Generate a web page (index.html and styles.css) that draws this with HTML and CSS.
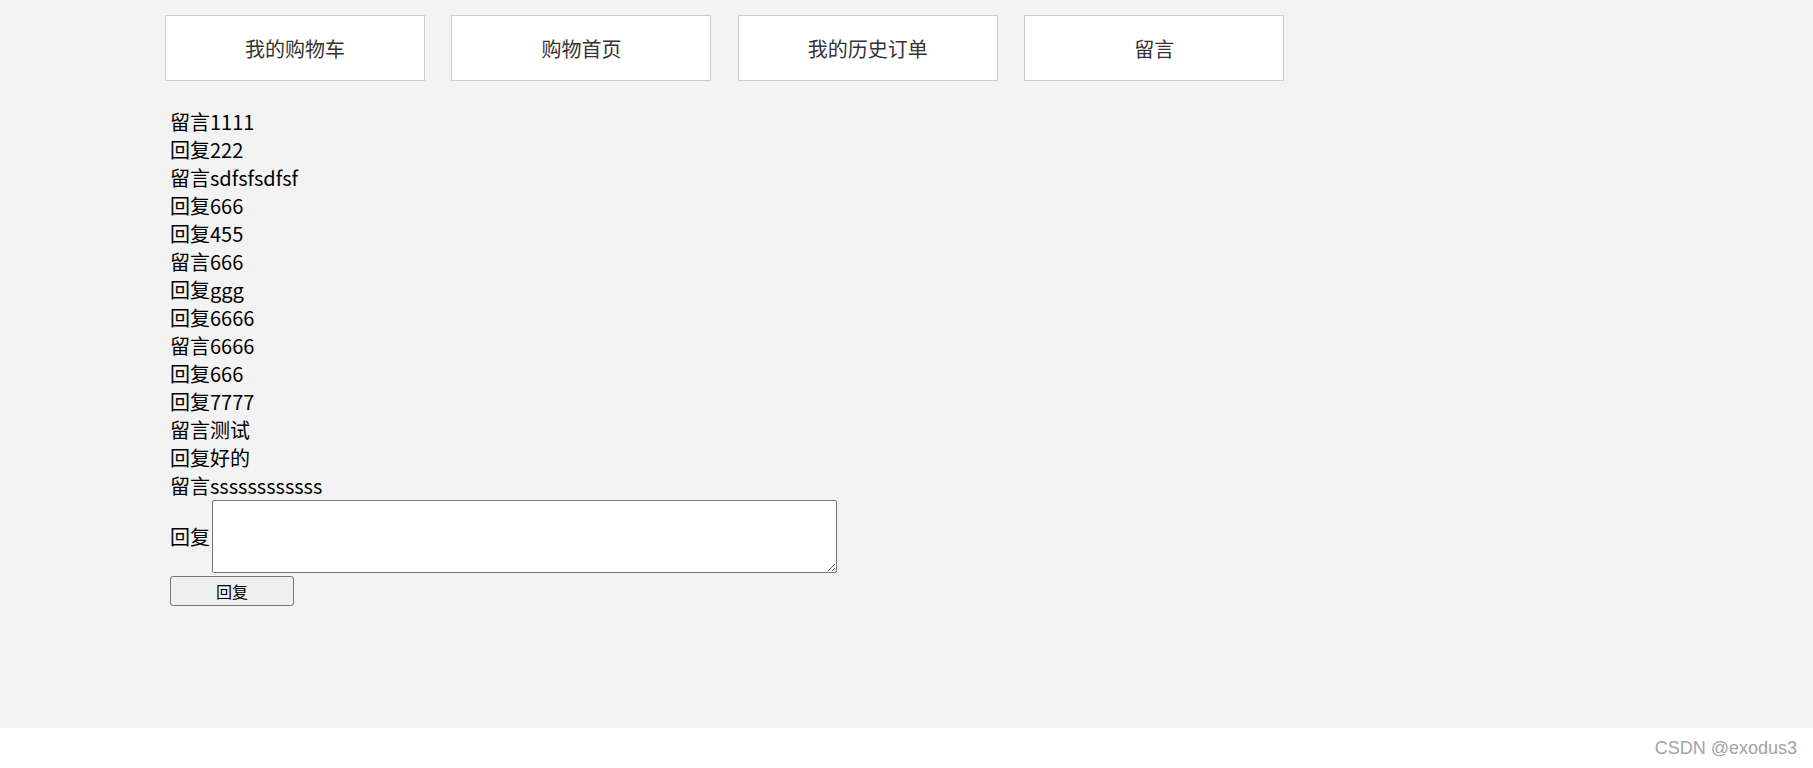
FILE: index.html
```html
<!DOCTYPE html>
<html lang="zh-CN">
<head>
<meta charset="UTF-8">
<title>留言</title>
<link rel="stylesheet" href="styles.css">
</head>
<body>

<div class="page">
  <div class="nav">
    <a class="nav-item" href="#">我的购物车</a>
    <a class="nav-item" href="#">购物首页</a>
    <a class="nav-item" href="#">我的历史订单</a>
    <a class="nav-item" href="#">留言</a>
  </div>

  <div class="messages">
    <div class="line">留言1111</div>
    <div class="line">回复222</div>
    <div class="line">留言sdfsfsdfsf</div>
    <div class="line">回复666</div>
    <div class="line">回复455</div>
    <div class="line">留言666</div>
    <div class="line">回复ggg</div>
    <div class="line">回复6666</div>
    <div class="line">留言6666</div>
    <div class="line">回复666</div>
    <div class="line">回复7777</div>
    <div class="line">留言测试</div>
    <div class="line">回复好的</div>
    <div class="line">留言ssssssssssss</div>

    <form class="reply">
      <div class="reply-row">
        <span class="reply-label">回复</span>
        <textarea class="reply-box"></textarea>
      </div>
      <button class="reply-btn" type="button">回复</button>
    </form>
  </div>
</div>

<div class="watermark">CSDN @exodus3</div>

</body>
</html>
```

FILE: styles.css
```css
body, html {
  margin: 0;
  padding: 0;
  font-family: "Noto Sans CJK SC", sans-serif;
  background: #fff;
}
.page {
  height: 728px;
  background: #f3f3f3;
  overflow: hidden;
}
.nav {
  display: flex;
  gap: 26.4px;
  padding: 15px 0 0 165px;
}
.nav-item {
  box-sizing: border-box;
  width: 260px;
  height: 66px;
  display: flex;
  align-items: center;
  justify-content: center;
  background: #fff;
  border: 1px solid #cccccc;
  color: #333;
  font-size: 20px;
  text-decoration: none;
}
.messages {
  margin-top: 27px;
  padding-left: 170px;
  font-size: 20px;
  line-height: 28px;
  color: #000;
}
.reply-row {
  display: flex;
  align-items: center;
}
.reply-label {
  margin-right: 2px;
}
.reply-box {
  box-sizing: border-box;
  width: 625px;
  height: 73px;
  margin: 0;
  border: 1px solid #767676;
  border-radius: 2px;
  background: #fff;
}
.reply-btn {
  box-sizing: border-box;
  display: block;
  width: 124px;
  height: 30px;
  margin-top: 3px;
  padding: 0;
  font-family: "Noto Sans CJK SC", sans-serif;
  font-size: 16px;
  color: #000;
  background: #efefef;
  border: 1px solid #767676;
  border-radius: 3px;
}
.watermark {
  height: 40px;
  line-height: 40px;
  text-align: right;
  padding-right: 16px;
  font-family: "Liberation Sans", Arial, sans-serif;
  font-size: 18px;
  color: #a3a3a3;
}
```
